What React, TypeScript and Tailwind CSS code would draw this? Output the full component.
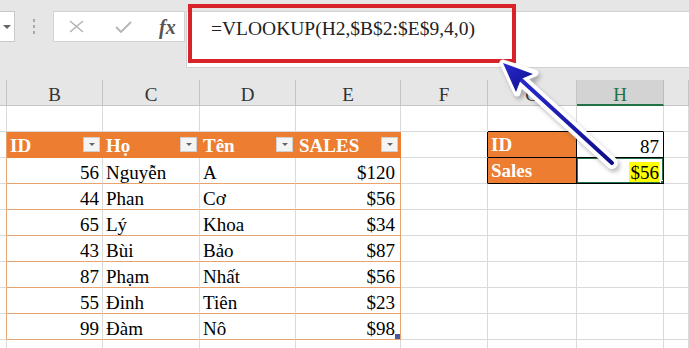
import React from "react";

const COLS = "grid grid-cols-[7px_96px_97px_96px_105px_87px_89px_87px_1fr] h-[26px]";
const LINE = "border-r border-b border-[#dadada]";
const TXT = "text-[19px] leading-[20px] pt-[5px] whitespace-nowrap overflow-hidden";

const data: [number, string, string, string][] = [
  [56, "Nguyễn", "A", "$120"],
  [44, "Phan", "Cơ", "$56"],
  [65, "Lý", "Khoa", "$34"],
  [43, "Bùi", "Bảo", "$87"],
  [87, "Phạm", "Nhất", "$56"],
  [55, "Đinh", "Tiên", "$23"],
  [99, "Đàm", "Nô", "$98"],
];

const FilterBtn = () => (
  <span className="w-[17px] h-[15px] mr-[3px] bg-[#f4f4f4] border border-[#cfcfcf] flex items-center justify-center">
    <span className="w-0 h-0 border-l-[3px] border-r-[3px] border-t-[3px] border-l-transparent border-r-transparent border-t-[#666]" />
  </span>
);

const HeadCell = ({ label }: { label: string }) => (
  <div className="bg-[#ed7d31] border-b border-[#ed7d31] flex items-center justify-between pl-[3px]">
    <span className="text-[19px] font-bold text-white leading-[20px] pt-[2px]">{label}</span>
    <FilterBtn />
  </div>
);

const Toolbar = () => (
  <div className="h-[80px] bg-[#e6e6e6] flex items-start pt-[11px]">
    <div className="w-[15px] h-[31px] bg-white border border-l-0 border-[#c9c9c9] flex items-center justify-center">
      <span className="w-0 h-0 border-l-[4px] border-r-[4px] border-t-[4px] border-l-transparent border-r-transparent border-t-[#666]" />
    </div>
    <div className="ml-[18px] mt-[8px] flex flex-col gap-[3px]">
      <span className="w-[2px] h-[3px] bg-[#a8a8a8]" />
      <span className="w-[2px] h-[3px] bg-[#a8a8a8]" />
      <span className="w-[2px] h-[3px] bg-[#a8a8a8]" />
    </div>
    <div className="ml-[18px] w-[132px] h-[31px] bg-white border border-[#d2d2d2] flex items-center">
      <svg className="ml-[15px]" width="15" height="13" viewBox="0 0 15 13">
        <path d="M1 1 L14 12 M14 1 L1 12" stroke="#b4b4b4" strokeWidth="1.6" fill="none" />
      </svg>
      <svg className="ml-[31px]" width="17" height="12" viewBox="0 0 17 12">
        <path d="M1 6 L6 11 L16 1" stroke="#b4b4b4" strokeWidth="1.8" fill="none" />
      </svg>
      <span className="ml-[27px] text-[20px] italic font-bold text-[#555] leading-none">fx</span>
    </div>
    <div className="ml-[1px] flex-1 h-[57px] bg-white border-t border-l border-b border-[#d2d2d2] pl-[24px] pt-[6px]">
      <span className="text-[19.5px] text-[#222] leading-[22px]">=VLOOKUP(H2,$B$2:$E$9,4,0)</span>
    </div>
  </div>
);

const ColHeader = () => {
  const letters = ["", "B", "C", "D", "E", "F", "G", "H", ""];
  return (
    <div className={`${COLS} bg-[#e6e6e6]`}>
      {letters.map((l, i) =>
        l === "H" ? (
          <div key={i} className={`bg-[#d3d3d3] text-[#217346] text-center border-r border-[#bdbdbd] border-b-2 border-b-[#217346] ${TXT}`}>
            {l}
          </div>
        ) : (
          <div key={i} className={`text-[#333] text-center border-r border-b border-[#c4c4c4] ${TXT}`}>
            {l}
          </div>
        )
      )}
    </div>
  );
};

const Empty = ({ n }: { n: number }) => (
  <>
    {Array.from({ length: n }).map((_, i) => (
      <div key={i} className={LINE} />
    ))}
  </>
);

const DataRow = ({ r, idx }: { r: [number, string, string, string]; idx: number }) => (
  <div className={COLS}>
    <div className="border-r border-b border-r-[#e9a36f] border-b-[#dadada]" />
    <div className={`border-r border-b border-r-[#dadada] border-b-[#e9a36f] text-right pr-[3px] ${TXT}`}>{r[0]}</div>
    <div className={`border-r border-b border-r-[#dadada] border-b-[#e9a36f] pl-[3px] ${TXT}`}>{r[1]}</div>
    <div className={`border-r border-b border-r-[#dadada] border-b-[#e9a36f] pl-[3px] ${TXT}`}>{r[2]}</div>
    <div className={`relative border-r border-b border-r-[#e9a36f] border-b-[#e9a36f] text-right pr-[5px] ${TXT}`}>
      {r[3]}
      {idx === 6 && <span className="absolute right-0 bottom-0 w-[5px] h-[5px] bg-[#4a5aa6]" />}
    </div>
    {idx === 0 ? (
      <>
        <div className="border-r border-b border-r-black border-b-[#dadada]" />
        <div className="bg-[#ed7d31] border-r border-b border-black pl-[3px] pt-[3px] text-[19px] font-bold text-white leading-[20px]">
          Sales
        </div>
        <div className={`relative border-r border-b border-black text-right pr-[4px] ${TXT}`}>
          <span className="bg-[#ffff00] pl-[2px]">$56</span>
          <span className="absolute -left-[1px] -top-[1px] -right-[1px] -bottom-[1px] border-2 border-[#217346]" />
          <span className="absolute -right-[3px] -bottom-[3px] w-[6px] h-[6px] bg-[#217346] border border-white" />
        </div>
        <div className={LINE} />
      </>
    ) : (
      <Empty n={4} />
    )}
  </div>
);

const Arrow = () => (
  <svg className="absolute left-0 top-0 pointer-events-none" width="689" height="348" viewBox="0 0 689 348">
    <defs>
      <filter id="sh" x="-20%" y="-20%" width="140%" height="140%">
        <feGaussianBlur stdDeviation="2" />
      </filter>
      <linearGradient id="bl" x1="0" y1="0" x2="1" y2="1">
        <stop offset="0" stopColor="#2a2ad0" />
        <stop offset="1" stopColor="#0d0d8a" />
      </linearGradient>
    </defs>
    <g transform="translate(2 3)" opacity="0.4" filter="url(#sh)">
      <line x1="612" y1="163" x2="520" y2="79" stroke="#555" strokeWidth="12" strokeLinecap="round" />
      <polygon points="503,63 535,73 517,93" fill="#555" stroke="#555" strokeWidth="7" strokeLinejoin="round" />
    </g>
    <line x1="612" y1="163" x2="520" y2="79" stroke="#fff" strokeWidth="12" strokeLinecap="round" />
    <polygon points="503,63 535,73 521,79 517,93" fill="#fff" stroke="#fff" strokeWidth="7" strokeLinejoin="round" />
    <line x1="612" y1="163" x2="518" y2="77" stroke="url(#bl)" strokeWidth="4" strokeLinecap="round" />
    <polygon points="503,63 533,74 521,79 516,92" fill="url(#bl)" />
  </svg>
);

export default function App() {
  return (
    <div className="relative w-[689px] h-[348px] overflow-hidden bg-white font-[family-name:'Liberation_Serif',serif] text-black">
      <Toolbar />
      <ColHeader />
      {/* row 1 */}
      <div className={COLS}>
        <Empty n={6} />
        <div className="border-r border-b border-r-[#dadada] border-b-black" />
        <div className="border-r border-b border-r-[#dadada] border-b-black" />
        <div className={LINE} />
      </div>
      {/* row 2: table headers */}
      <div className={COLS}>
        <div className="border-r border-b border-r-[#e9a36f] border-b-[#dadada]" />
        <HeadCell label="ID" />
        <HeadCell label="Họ" />
        <HeadCell label="Tên" />
        <HeadCell label="SALES" />
        <div className="border-r border-b border-r-black border-b-[#dadada]" />
        <div className="bg-[#ed7d31] border-r border-b border-black pl-[3px] pt-[3px] text-[19px] font-bold text-white leading-[20px]">
          ID
        </div>
        <div className={`border-r border-b border-black text-right pr-[4px] ${TXT}`}>87</div>
        <div className={LINE} />
      </div>
      {data.map((r, i) => (
        <DataRow key={i} r={r} idx={i} />
      ))}
      <div className={COLS}>
        <Empty n={9} />
      </div>
      {/* formula highlight */}
      <div className="absolute left-[188px] top-[4px] w-[328px] h-[59px] border-[4px] border-[#d8232a]" />
      <Arrow />
    </div>
  );
}
